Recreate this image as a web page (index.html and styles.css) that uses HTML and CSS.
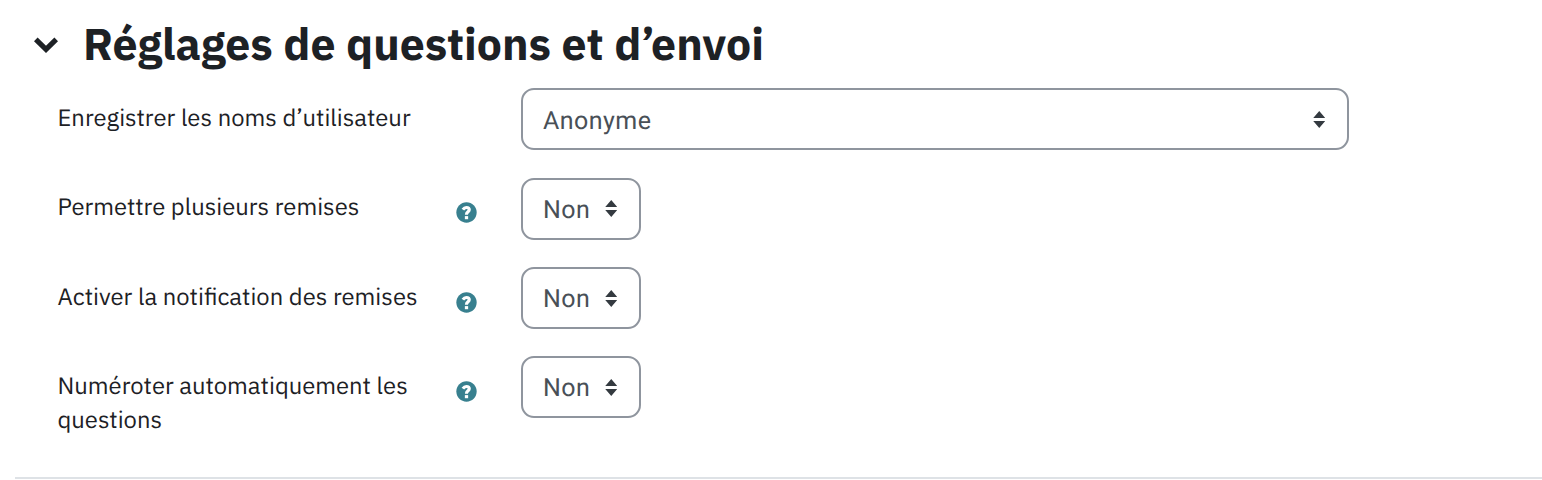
FILE: index.html
```html
<!DOCTYPE html>
<html lang="fr">
<head>
<meta charset="utf-8">
<title>Réglages de questions et d’envoi</title>
<link rel="stylesheet" href="styles.css">
</head>
<body>
<svg class="symbols" aria-hidden="true">
  <symbol id="help" viewBox="0 0 512 512"><path fill="currentColor" d="M504 256c0 137-111 248-248 248S8 393 8 256 119 8 256 8s248 111 248 248z"/><path fill="none" stroke="#fff" stroke-width="76" d="M168 188c22-34 47-54 84-54 40 0 72 20 72 56 0 54-68 48-68 106v16"/><path fill="#fff" d="M216 344h80v76h-80z"/></symbol>
  <symbol id="sort" viewBox="0 0 12 17"><path fill="currentColor" d="M0 7 6 0l6 7zM0 10h12l-6 7z"/></symbol>
</svg>
<section class="settings">
  <h3 class="heading">
    <svg class="chevron" viewBox="0 0 24 16"><path d="M1.800 2.400 12 12.300 22.200 2.400" fill="none" stroke="currentColor" stroke-width="5.200"/></svg>
    <span class="title">Réglages de questions et d’envoi</span>
  </h3>
  <div class="row">
    <div class="label">Enregistrer les noms d’utilisateur</div>
    <div class="select wide"><span class="value">Anonyme</span><svg class="sort"><use href="#sort"/></svg></div>
  </div>
  <div class="row">
    <div class="label">Permettre plusieurs remises</div>
    <svg class="help"><use href="#help"/></svg>
    <div class="select"><span class="value">Non</span><svg class="sort"><use href="#sort"/></svg></div>
  </div>
  <div class="row">
    <div class="label">Activer la notification des remises</div>
    <svg class="help"><use href="#help"/></svg>
    <div class="select"><span class="value">Non</span><svg class="sort"><use href="#sort"/></svg></div>
  </div>
  <div class="row">
    <div class="label">Numéroter automatiquement les<br>questions</div>
    <svg class="help"><use href="#help"/></svg>
    <div class="select"><span class="value">Non</span><svg class="sort"><use href="#sort"/></svg></div>
  </div>
</section>
</body>
</html>
```
FILE: styles.css
```css
* { box-sizing: border-box; }
body { margin: 0; background: #fff; color: #1d2125; font-family: "IBM Plex Sans", "Open Sans", "Noto Sans", sans-serif; overflow: hidden; text-rendering: geometricPrecision; -webkit-font-smoothing: antialiased; }
.symbols { display: none; }
.settings { height: 479px; margin-left: 15px; border-bottom: 2px solid #dee2e6; }
.heading { display: flex; align-items: center; height: 88.300px; margin: 0; padding-left: 19px; font-size: 44.600px; line-height: 60px; font-weight: 700; }
.chevron { width: 24px; height: 16px; margin: 2px 25px 0 0; }
.title { white-space: nowrap; }
.row { display: grid; grid-template-columns: 397.500px 65.500px auto; align-items: start; justify-content: start; height: 89.300px; padding-left: 43px; }
.label { grid-column: 1; padding-top: 12.900px; margin-left: -0.500px; font-size: 23.800px; line-height: 34px; white-space: nowrap; }
.help { grid-column: 2; width: 21px; height: 21px; margin: 24.700px 0 0; color: #38808f; }
.select { grid-column: 3; display: flex; align-items: center; justify-content: space-between; width: 120px; height: 62px; padding: 0 22px 0 20px; border: 2px solid #8f959e; border-radius: 13px; color: #495057; font-family: Roboto, "Noto Sans", sans-serif; font-size: 25px; letter-spacing: 0.450px; }
.wide { width: 828px; }
.value { padding-top: 3.600px; }
.sort { width: 12.500px; height: 17px; margin-top: 0.500px; color: #343a40; }
```
